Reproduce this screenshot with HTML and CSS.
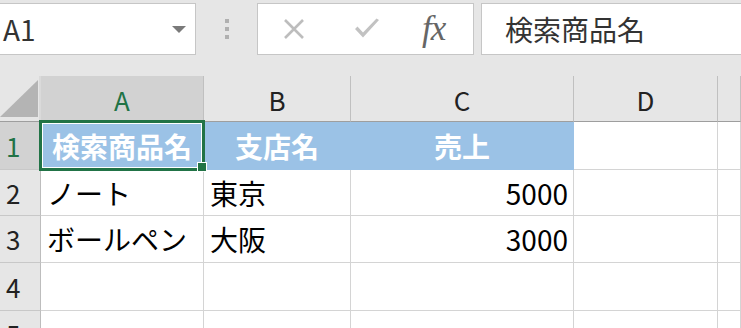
FILE: index.html
```html
<!DOCTYPE html>
<html lang="ja">

<head>
    <meta charset="UTF-8">
    <meta name="viewport" content="width=device-width, initial-scale=1.0">
    <link rel="stylesheet" href="styles.css">
    <title>Excel</title>
</head>

<body>
    <div class="toolbar">
        <div class="namebox">
            <span class="ref">A1</span>
            <span class="caret"></span>
        </div>
        <div class="grip"><i></i><i></i><i></i></div>
        <div class="fbuttons">
            <svg class="icon-x" width="22" height="20" viewBox="0 0 22 20">
                <path d="M2 1 L20 19 M20 1 L2 19" stroke="#bdbdbd" stroke-width="2.6" fill="none" />
            </svg>
            <svg class="icon-check" width="26" height="22" viewBox="0 0 26 22">
                <path d="M1 11 L9 19.5 L25 2 L22.5 0.5 L9 14.5 L3.5 8.5 Z" fill="#c2c2c2" />
            </svg>
            <span class="fx">fx</span>
        </div>
        <div class="fbar">検索商品名</div>
    </div>

    <div class="sheet">
        <div class="corner"><span class="tri"></span></div>
        <div class="col-head sel-head">A</div>
        <div class="col-head">B</div>
        <div class="col-head">C</div>
        <div class="col-head">D</div>
        <div class="col-head"></div>

        <div class="row-head sel-head">1</div>
        <div class="cell title a1">検索商品名
            <div class="selection"><span class="handle"></span></div>
        </div>
        <div class="cell title">支店名</div>
        <div class="cell title">売上</div>
        <div class="cell"></div>
        <div class="cell"></div>

        <div class="row-head">2</div>
        <div class="cell">ノート</div>
        <div class="cell">東京</div>
        <div class="cell num">5000</div>
        <div class="cell"></div>
        <div class="cell"></div>

        <div class="row-head">3</div>
        <div class="cell">ボールペン</div>
        <div class="cell">大阪</div>
        <div class="cell num">3000</div>
        <div class="cell"></div>
        <div class="cell"></div>

        <div class="row-head">4</div>
        <div class="cell"></div>
        <div class="cell"></div>
        <div class="cell"></div>
        <div class="cell"></div>
        <div class="cell"></div>

        <div class="row-head">5</div>
        <div class="cell"></div>
        <div class="cell"></div>
        <div class="cell"></div>
        <div class="cell"></div>
        <div class="cell"></div>
    </div>
</body>

</html>
```

FILE: styles.css
```css
* {
    box-sizing: border-box;
}

body {
    margin: 0;
    height: 328px;
    overflow: hidden;
    background-color: #e6e6e6;
    font-family: "Noto Sans CJK JP", "Liberation Sans", sans-serif;
    color: #000;
}

/* formula bar */
.toolbar {
    display: flex;
    align-items: flex-start;
    height: 76px;
    padding-top: 3px;
}

.namebox {
    display: flex;
    align-items: center;
    width: 197px;
    height: 52px;
    margin-left: -1px;
    padding-left: 3px;
    background-color: #fff;
    border: 1px solid #c6c6c6;
}

.ref {
    font-size: 28px;
    line-height: 1;
    color: #333;
}

.caret {
    margin-left: auto;
    margin-right: 9px;
    width: 0;
    height: 0;
    border-left: 7px solid transparent;
    border-right: 7px solid transparent;
    border-top: 7px solid #7a7a7a;
}

.grip {
    display: flex;
    flex-direction: column;
    gap: 4px;
    margin-left: 29px;
    margin-top: 16px;
}

.grip i {
    display: block;
    width: 4px;
    height: 4px;
    background-color: #b0b0b0;
}

.fbuttons {
    display: flex;
    align-items: center;
    width: 217px;
    height: 52px;
    margin-left: 28px;
    background-color: #fff;
    border: 1px solid #c6c6c6;
}

.icon-x {
    margin-left: 25px;
}

.icon-check {
    margin-left: 49px;
}

.fx {
    margin-left: 42px;
    margin-bottom: 2px;
    font-family: "Liberation Serif", serif;
    font-style: italic;
    font-size: 35px;
    line-height: 1;
    letter-spacing: -1px;
    color: #666;
}

.fbar {
    flex: 1;
    display: flex;
    align-items: center;
    height: 52px;
    margin-left: 7px;
    margin-right: -1px;
    padding-left: 23px;
    background-color: #fff;
    border: 1px solid #c6c6c6;
    font-size: 28px;
    line-height: 1;
    color: #333;
}

/* grid */
.sheet {
    display: grid;
    grid-template-columns: 41px 163px 147px 223px 144px 1fr;
    grid-template-rows: 46px 48px 46px 47px 48px 47px;
}

.corner {
    position: relative;
    background-color: #e6e6e6;
    border-right: 2px solid #dadada;
    border-bottom: 1px solid #9e9e9e;
}

.tri {
    position: absolute;
    left: 0;
    top: 4px;
    width: 38px;
    height: 37px;
    background-color: #b4b4b4;
    clip-path: polygon(100% 0, 100% 100%, 0 100%);
}

.col-head {
    display: flex;
    align-items: center;
    justify-content: center;
    background-color: #e6e6e6;
    border-right: 1px solid #c0c0c0;
    border-bottom: 1px solid #9e9e9e;
    font-size: 26px;
    line-height: 1;
    color: #222;
    padding-top: 2px;
}

.row-head {
    display: flex;
    align-items: center;
    padding-left: 6px;
    background-color: #e6e6e6;
    border-right: 1px solid #bdbdbd;
    border-bottom: 1px solid #c8c8c8;
    font-size: 26px;
    line-height: 1;
    color: #222;
}

.sel-head {
    background-color: #d2d2d2;
    color: #217346;
}

.cell {
    display: flex;
    align-items: center;
    padding: 0 6px;
    background-color: #fff;
    border-right: 1px solid #d4d4d4;
    border-bottom: 1px solid #d4d4d4;
    font-size: 28px;
    line-height: 1;
    white-space: nowrap;
}

.title {
    justify-content: center;
    background-color: #9bc2e6;
    border-color: #9bc2e6;
    color: #fff;
    font-weight: bold;
}

.num {
    justify-content: flex-end;
    padding-right: 5px;
}

/* active cell */
.a1 {
    position: relative;
}

.selection {
    position: absolute;
    top: -2px;
    left: -2px;
    right: -2px;
    bottom: -2px;
    border: 3px solid #217346;
    box-shadow: inset 0 0 0 1px #fff;
}

.handle {
    position: absolute;
    right: -4px;
    bottom: -3px;
    width: 8px;
    height: 8px;
    background-color: #217346;
    box-shadow: 0 0 0 1px #fff;
}
```
